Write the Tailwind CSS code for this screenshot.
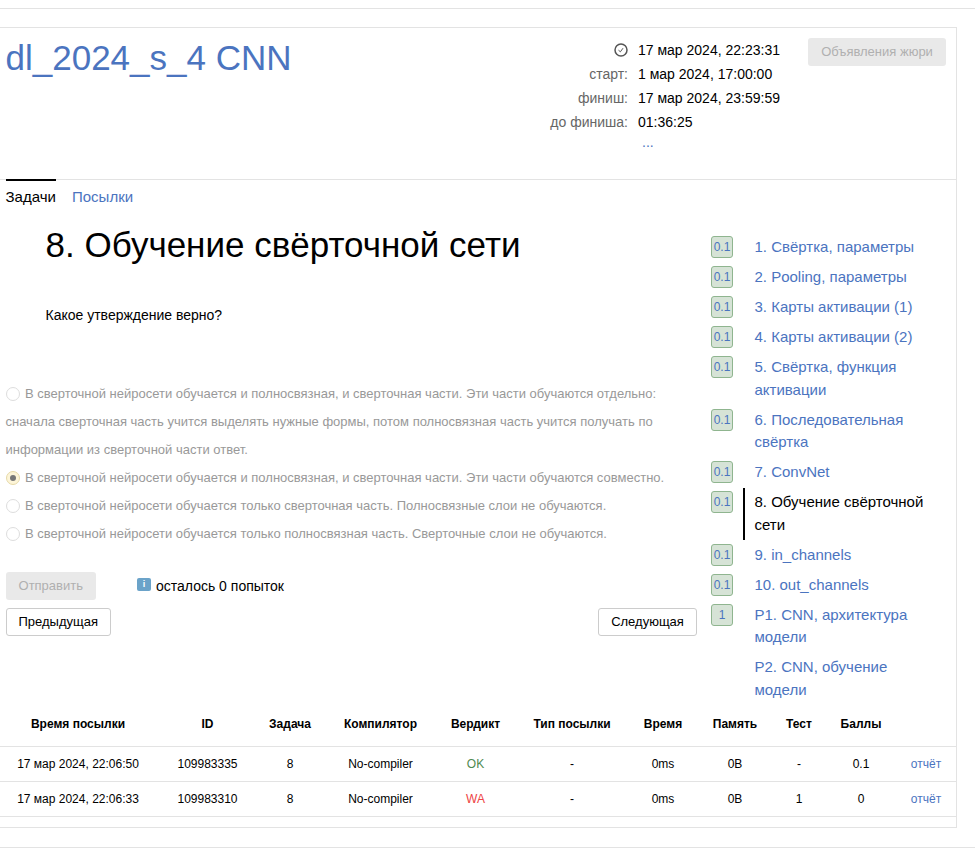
<!DOCTYPE html>
<html lang="ru">

<head>
    <meta charset="UTF-8">
    <title>dl_2024_s_4 CNN</title>
    <script src="https://cdn.jsdelivr.net/npm/@tailwindcss/browser@4"></script>
</head>

<body class="bg-white text-black font-['Liberation_Sans',Arial,sans-serif] overflow-hidden">

    <div class="pt-2 h-[868px]">
        <div class="border-t border-[#e3e3e3] h-[19px]"></div>

        <!-- Contest box -->
        <div class="w-[957px] h-[801px] border-t border-r border-b border-[#e3e3e3]">

            <!-- Header -->
            <div class="h-[151px] flex pl-[5.5px] border-b border-[#e3e3e3] box-content">
                <h1 class="w-[524.5px] pt-[9px] text-[35px] leading-[42px] text-[#4b74bf]">dl_2024_s_4 CNN</h1>
                <div class="w-[278px] pt-[10px] text-[14px] leading-[24px]">
                    <div class="flex">
                        <div class="w-[98px] flex justify-end items-center text-[#666]">
                            <svg class="w-[14px] h-[14px]" viewBox="0 0 14 14" fill="none" stroke="#555" stroke-width="1.5">
                                <circle cx="7" cy="7" r="6"></circle>
                                <path d="M4.5 7.2 L6.4 8.8 L9 5.2" stroke-width="1"></path>
                            </svg>
                        </div>
                        <div class="ml-[10px]">17 мар 2024, 22:23:31</div>
                    </div>
                    <div class="flex">
                        <div class="w-[98px] text-right text-[#666]">старт:</div>
                        <div class="ml-[10px]">1 мар 2024, 17:00:00</div>
                    </div>
                    <div class="flex">
                        <div class="w-[98px] text-right text-[#666]">финиш:</div>
                        <div class="ml-[10px]">17 мар 2024, 23:59:59</div>
                    </div>
                    <div class="flex">
                        <div class="w-[98px] text-right text-[#666]">до финиша:</div>
                        <div class="ml-[10px]">01:36:25</div>
                    </div>
                    <div class="pl-[112px] leading-[17px] text-[#4b74bf]">...</div>
                </div>
                <div class="pt-[10px]">
                    <button class="w-[138px] h-[28px] rounded-[3px] bg-[#e9e9e9] text-[#b0b0b0] text-[13px]">Объявления жюри</button>
                </div>
            </div>

            <!-- Tabs -->
            <div class="flex pl-[5.5px] text-[15px] leading-[34px] h-[34px] -mt-px">
                <div class="w-[50.5px] border-t-2 border-black leading-[32px]">Задачи</div>
                <div class="ml-4 pt-px text-[#4b74bf]">Посылки</div>
            </div>

            <!-- Problem and problem list -->
            <div class="flex h-[489px]">
                <div class="w-[705px] pl-[5.5px]">
                    <h2 class="pl-[40px] pt-[11px] text-[35px] leading-[42px]">8. Обучение свёрточной сети</h2>
                    <p class="pl-[40px] mt-[39px] text-[14px] leading-[20px]">Какое утверждение верно?</p>

                    <div class="mt-[55px] w-[690px] text-[13px] leading-[28px] text-[#999]">
                        <div>
                            <span class="inline-block align-[-3px] w-[14px] h-[14px] mr-[5.5px] rounded-full border border-[#ddd] bg-white"></span>В сверточной нейросети обучается и полносвязная, и сверточная части. Эти части обучаются отдельно: сначала сверточная часть учится выделять нужные формы, потом полносвязная часть учится получать по информации из сверточной части ответ.
                        </div>
                        <div>
                            <span class="inline-block align-[-3px] w-[14px] h-[14px] mr-[5.5px] rounded-full border border-[#e6d9a8] bg-[#fdf5d8]"><span class="block w-[6px] h-[6px] m-[3px] rounded-full bg-[#777]"></span></span>В сверточной нейросети обучается и полносвязная, и сверточная части. Эти части обучаются совместно.
                        </div>
                        <div>
                            <span class="inline-block align-[-3px] w-[14px] h-[14px] mr-[5.5px] rounded-full border border-[#ddd] bg-white"></span>В сверточной нейросети обучается только сверточная часть. Полносвязные слои не обучаются.
                        </div>
                        <div>
                            <span class="inline-block align-[-3px] w-[14px] h-[14px] mr-[5.5px] rounded-full border border-[#ddd] bg-white"></span>В сверточной нейросети обучается только полносвязная часть. Сверточные слои не обучаются.
                        </div>
                    </div>

                    <div class="mt-[24px] flex items-center h-[28px]">
                        <button class="w-[90.5px] h-[28px] rounded-[3px] bg-[#e9e9e9] text-[#b0b0b0] text-[13px]">Отправить</button>
                        <span class="ml-[41px] mb-[3px] w-[14px] h-[13px] rounded-[2px] bg-[#6ba3c9] text-white text-[9px] leading-[13px] text-center font-bold">i</span>
                        <span class="ml-[5px] text-[14px]">осталось 0 попыток</span>
                    </div>

                    <div class="mt-[8px] flex justify-between w-[691.5px]">
                        <button class="w-[105.5px] h-[28px] rounded-[3px] border border-[#ccc] bg-white text-[13px]">Предыдущая</button>
                        <button class="w-[99px] h-[28px] rounded-[3px] border border-[#ccc] bg-white text-[13px]">Следующая</button>
                    </div>
                </div>

                <ul class="w-[240px] pt-[23px] text-[15px] leading-[22.5px] text-[#4b74bf]">
                    <li class="flex h-[30px]">
                        <span class="w-[22px] h-[22px] ml-[6px] rounded-[3px] border border-[#8fb58f] bg-[#d6e3d6] text-[12px] leading-[20px] text-center">0.1</span>
                        <span class="ml-[10px] pl-[11.5px]">1. Свёртка, параметры</span>
                    </li>
                    <li class="flex h-[30px]">
                        <span class="w-[22px] h-[22px] ml-[6px] rounded-[3px] border border-[#8fb58f] bg-[#d6e3d6] text-[12px] leading-[20px] text-center">0.1</span>
                        <span class="ml-[10px] pl-[11.5px]">2. Pooling, параметры</span>
                    </li>
                    <li class="flex h-[30px]">
                        <span class="w-[22px] h-[22px] ml-[6px] rounded-[3px] border border-[#8fb58f] bg-[#d6e3d6] text-[12px] leading-[20px] text-center">0.1</span>
                        <span class="ml-[10px] pl-[11.5px]">3. Карты активации (1)</span>
                    </li>
                    <li class="flex h-[30px]">
                        <span class="w-[22px] h-[22px] ml-[6px] rounded-[3px] border border-[#8fb58f] bg-[#d6e3d6] text-[12px] leading-[20px] text-center">0.1</span>
                        <span class="ml-[10px] pl-[11.5px]">4. Карты активации (2)</span>
                    </li>
                    <li class="flex h-[52.5px]">
                        <span class="w-[22px] h-[22px] ml-[6px] rounded-[3px] border border-[#8fb58f] bg-[#d6e3d6] text-[12px] leading-[20px] text-center">0.1</span>
                        <span class="ml-[10px] pl-[11.5px] w-[190px]">5. Свёртка, функция активации</span>
                    </li>
                    <li class="flex h-[52.5px]">
                        <span class="w-[22px] h-[22px] ml-[6px] rounded-[3px] border border-[#8fb58f] bg-[#d6e3d6] text-[12px] leading-[20px] text-center">0.1</span>
                        <span class="ml-[10px] pl-[11.5px] w-[190px]">6. Последовательная свёртка</span>
                    </li>
                    <li class="flex h-[30px]">
                        <span class="w-[22px] h-[22px] ml-[6px] rounded-[3px] border border-[#8fb58f] bg-[#d6e3d6] text-[12px] leading-[20px] text-center">0.1</span>
                        <span class="ml-[10px] pl-[11.5px]">7. ConvNet</span>
                    </li>
                    <li class="flex h-[52.5px]">
                        <span class="w-[22px] h-[22px] ml-[6px] rounded-[3px] border border-[#8fb58f] bg-[#d6e3d6] text-[12px] leading-[20px] text-center">0.1</span>
                        <span class="ml-[10px] pl-[9.5px] w-[190px] h-[52px] -mt-[3px] pt-[3px] border-l-2 border-black text-black">8. Обучение свёрточной сети</span>
                    </li>
                    <li class="flex h-[30px]">
                        <span class="w-[22px] h-[22px] ml-[6px] rounded-[3px] border border-[#8fb58f] bg-[#d6e3d6] text-[12px] leading-[20px] text-center">0.1</span>
                        <span class="ml-[10px] pl-[11.5px]">9. in_channels</span>
                    </li>
                    <li class="flex h-[30px]">
                        <span class="w-[22px] h-[22px] ml-[6px] rounded-[3px] border border-[#8fb58f] bg-[#d6e3d6] text-[12px] leading-[20px] text-center">0.1</span>
                        <span class="ml-[10px] pl-[11.5px]">10. out_channels</span>
                    </li>
                    <li class="flex h-[52.5px]">
                        <span class="w-[22px] h-[22px] ml-[6px] rounded-[3px] border border-[#8fb58f] bg-[#d6e3d6] text-[12px] leading-[20px] text-center">1</span>
                        <span class="ml-[10px] pl-[11.5px] w-[190px]">P1. CNN, архитектура модели</span>
                    </li>
                    <li class="flex">
                        <span class="w-[22px] h-[22px] ml-[6px]"></span>
                        <span class="ml-[10px] pl-[11.5px] w-[190px]">P2. CNN, обучение модели</span>
                    </li>
                </ul>
            </div>

            <!-- Submissions -->
            <table class="w-[956px] table-fixed text-[12px] text-center border-collapse">
                <colgroup>
                    <col class="w-[156px]"><col class="w-[103px]"><col class="w-[62px]"><col class="w-[118px]">
                    <col class="w-[72px]"><col class="w-[121px]"><col class="w-[62px]"><col class="w-[82px]">
                    <col class="w-[46px]"><col class="w-[78px]"><col class="w-[56px]">
                </colgroup>
                <thead>
                    <tr class="h-[44px] border-b border-[#e3e3e3] font-bold">
                        <th>Время посылки</th><th>ID</th><th>Задача</th><th class="pl-px">Компилятор</th><th class="pl-px">Вердикт</th>
                        <th class="pl-px">Тип посылки</th><th>Время</th><th>Память</th><th>Тест</th><th>Баллы</th><th></th>
                    </tr>
                </thead>
                <tbody>
                    <tr class="h-[35px] border-b border-[#e3e3e3]">
                        <td>17 мар 2024, 22:06:50</td><td>109983335</td><td>8</td><td class="pl-px">No-compiler</td>
                        <td class="pl-px text-[#4f8a4f]">OK</td><td class="pl-px">-</td><td>0ms</td><td>0B</td><td>-</td><td>0.1</td>
                        <td class="pr-1 text-[#4b74bf]">отчёт</td>
                    </tr>
                    <tr class="h-[35px] border-b border-[#e3e3e3]">
                        <td>17 мар 2024, 22:06:33</td><td>109983310</td><td>8</td><td class="pl-px">No-compiler</td>
                        <td class="pl-px text-[#ee4444]">WA</td><td class="pl-px">-</td><td>0ms</td><td>0B</td><td>1</td><td>0</td>
                        <td class="pr-1 text-[#4b74bf]">отчёт</td>
                    </tr>
                </tbody>
            </table>
        </div>

        <div class="mt-[19px] border-t border-[#e3e3e3]"></div>
    </div>

</body>

</html>
